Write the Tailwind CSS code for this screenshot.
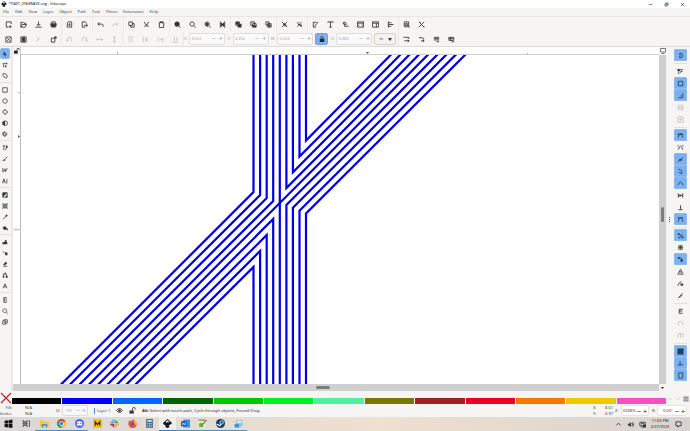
<!DOCTYPE html>
<html lang="en">
<head>
<meta charset="utf-8">
<title>*FAST_ENGRAVE.svg - Inkscape</title>
<script src="https://cdn.jsdelivr.net/npm/@tailwindcss/browser@4"></script>
</head>
<body class="h-screen overflow-hidden flex flex-col bg-[#f6f5f4] text-[#2b2f31] font-['Open_Sans','Noto_Sans',sans-serif] text-[4px] leading-[6px]">

<header class="h-[8px] shrink-0 bg-white flex items-center text-black">
  <svg class="size-[6px] ml-px mr-[2px]" viewBox="0 0 16 16"><path d="M8 0 15 7Q16 9 12 10L10 12 12 14 8 16 4 14 5 12 2 10Q0 9 1 7Z" fill="#16191c"/><path d="M8 2 11 5 9 6 8 5 6 7 5 5Z" fill="#fff"/></svg>
  <h1 class="flex-1">*FAST_ENGRAVE.svg - Inkscape</h1>
  <div class="flex" data-icons="min restore close" data-kind="window"></div>
</header>

<nav class="h-[9px] shrink-0 flex items-center gap-[6px] pl-[3px] border-b border-[#e9e7e5]">
  <button>File</button><button>Edit</button><button>View</button><button>Layer</button><button>Object</button><button>Path</button><button>Text</button><button>Filters</button><button>Extensions</button><button>Help</button>
</nav>

<div class="h-[15px] shrink-0 flex items-center pl-px" data-kind="top" data-icons="new open save print | import export | undo -redo | copy cut paste | zoomsel zoomdraw zoompage zoomwidth | dup clone unlink | group ungroup | fillstroke text layers xml docprops align | prefs tools"></div>

<div class="h-[15px] shrink-0 flex items-center pl-px border-b border-[#dddbd9]">
  <div class="flex items-center" data-kind="top" data-icons="selall sellayer -desel touch | -rotl -rotr -fliph -flipv | -raisetop -raise -lower -lowbot |"></div>
  <div class="flex items-center gap-[2px] text-[#a2a2a0]">
    <div class="flex items-center gap-[2px]"><label for="x">X:</label>
      <div class="w-[36px] h-[12px] border border-[#e0dedc] rounded-[2px] bg-[#fbfafa] flex items-center"><input id="x" value="8.522" class="w-full min-w-0 pl-px outline-none"><button class="w-[7px] shrink-0 text-[7px]" aria-label="Decrease X">−</button><button class="w-[7px] shrink-0 text-[7px]" aria-label="Increase X">+</button></div></div>
    <div class="flex items-center gap-[2px]"><label for="y">Y:</label>
      <div class="w-[36px] h-[12px] border border-[#e0dedc] rounded-[2px] bg-[#fbfafa] flex items-center"><input id="y" value="4.254" class="w-full min-w-0 pl-px outline-none"><button class="w-[7px] shrink-0 text-[7px]" aria-label="Decrease Y">−</button><button class="w-[7px] shrink-0 text-[7px]" aria-label="Increase Y">+</button></div></div>
    <div class="flex items-center gap-[2px]"><label for="w">W:</label>
      <div class="w-[36px] h-[12px] border border-[#e0dedc] rounded-[2px] bg-[#fbfafa] flex items-center"><input id="w" value="0.024" class="w-full min-w-0 pl-px outline-none"><button class="w-[7px] shrink-0 text-[7px]" aria-label="Decrease width">−</button><button class="w-[7px] shrink-0 text-[7px]" aria-label="Increase width">+</button></div></div>
    <button class="w-[13px] h-[12px] rounded-[2px] border border-[#6fa3e0] bg-[#7db1ee] grid place-items-center text-[#1d2b3a]" aria-label="Lock ratio"><svg class="size-[6px]" viewBox="0 0 16 16"><path d="M2 7h12v9H2z" fill="currentColor"/><path d="M5 7V4q0-3 3-3t3 3v3" fill="none" stroke="currentColor" stroke-width="2"/></svg></button>
    <div class="flex items-center gap-[2px]"><label for="h">H:</label>
      <div class="w-[36px] h-[12px] border border-[#e0dedc] rounded-[2px] bg-[#fbfafa] flex items-center"><input id="h" value="0.000" class="w-full min-w-0 pl-px outline-none"><button class="w-[7px] shrink-0 text-[7px]" aria-label="Decrease height">−</button><button class="w-[7px] shrink-0 text-[7px]" aria-label="Increase height">+</button></div></div>
    <div class="grid w-[22px] h-[12px] border border-[#d3d0cd] rounded-[2px] bg-[#f3f2f1] items-center text-[#2e3436]">
      <select aria-label="Units" class="col-start-1 row-start-1 appearance-none pl-[4px] w-full outline-none"><option>in</option><option>mm</option></select>
      <svg class="col-start-1 row-start-1 justify-self-end mr-[3px] w-[4px] h-[3px] pointer-events-none" viewBox="0 0 8 6"><path d="M0 0h8L4 6z" fill="currentColor"/></svg>
    </div>
  </div>
  <div class="flex items-center pl-[2px]" data-kind="top" data-icons="| scstroke sccorner scgrad scpat"></div>
</div>

<main class="flex-1 min-h-0 flex">
  <div class="w-[13px] shrink-0 flex flex-col pt-px border-r-2 border-[#ebe9e7]" data-kind="left" data-icons="*select node shape | rect circle star box spiral | pencil pen calli textA | grad mesh dropper bucket | tweak spray eraser connector lpe | measure zoom pages"></div>

  <div class="flex-1 min-w-0 grid grid-cols-[7px_1fr_7px] grid-rows-[8px_1fr_7px]">
    <button class="grid place-items-center text-[#222]" aria-label="Lock guides"><svg class="size-[6px]" viewBox="0 0 16 16"><path d="M0 7h10v8H0z" fill="currentColor"/><path d="M8 7V4q0-3 3-3t3 3v2" fill="none" stroke="currentColor" stroke-width="2"/></svg></button>
    <svg class="w-full h-[8px] bg-white border-l border-b border-[#cfcfcf]" aria-label="Horizontal ruler"><path d="M96.500 5v3M506.500 6v2" stroke="#aaa"/><path d="M345 5h3l-1.500 2z" fill="#555"/></svg>
    <button class="grid place-items-center text-[#555]" aria-label="Display mode"><svg class="size-[6px]" viewBox="0 0 12 12"><path d="M1 1h10v7H1zM3 11h6" fill="#fff" stroke="currentColor" stroke-width="1.600"/></svg></button>

    <svg class="w-[7px] h-full bg-white" aria-label="Vertical ruler"><path d="M5 37.500h2M5 174.500h2" stroke="#bbb"/><path d="M1 174.500h4" stroke="#ccc" stroke-width="2"/><path d="M5 80v3l2-1.500z" fill="#555"/></svg>
    <svg class="w-full h-full bg-white border-l border-[#bdbdbd] overflow-hidden" aria-label="Drawing">
      <g transform="translate(-21 -55)" fill="none" stroke="#0000ee" stroke-width="2.200">
        <path d="M253.500 50V192L56.500 389"/><path d="M260.100 50V195L65.500 389"/><path d="M266.700 50V198L75 389"/><path d="M273.200 50V201L84.500 389"/>
        <path d="M279.800 50V390"/><path d="M432.700 50 93.700 389"/>
        <path d="M286.400 50V188L423.500 50"/><path d="M292.900 50V172.300L414 50"/><path d="M299.500 50V156.500L405 50"/><path d="M306 50V140.500L395.500 50"/>
        <path d="M286.400 390V205L442 50"/><path d="M292.900 390V207.800L451 50"/><path d="M299.500 390V210.600L460.500 50"/><path d="M306 390V213.400L470 50"/>
        <path d="M273.200 390V219L103 389"/><path d="M266.700 390V235L112.500 389"/><path d="M260.100 390V251L121.800 389"/><path d="M253.500 390V267L131 389"/>
      </g>
    </svg>
    <div class="bg-[#cfcfcf] flex justify-center pt-[152px]"><div class="w-[3px] h-[15px] rounded-full bg-[#7d7d7d]"></div></div>

    <div class="col-span-2 bg-[#cfcfcf] flex items-center justify-center pr-[27px]"><div class="w-[14px] h-[3px] rounded-full bg-[#7d7d7d]"></div></div>
    <div class="grid place-items-center"><svg class="w-[3px] h-[2px]" viewBox="0 0 6 4"><path d="M0 0h6L3 4z" fill="#222"/></svg></div>
  </div>

  <div class="w-[24px] shrink-0 flex">
    <div class="w-[7px] self-center flex flex-col items-center gap-px"><i class="size-px bg-[#444]"></i><i class="size-px bg-[#444]"></i><i class="size-px bg-[#444]"></i></div>
    <div class="flex flex-col pt-[2px] pl-px" data-kind="snap" data-icons="*magnet | bbox *bbedge *bbcorner -bbmid -bbctr | *snode smid *spath *sint *scusp scen sperp *stan | *sother ctr *rot base mask clip | pgm -guide -grid2 | *gridf *guidex *page"></div>
  </div>
</main>

<div class="h-[13px] shrink-0 flex items-end">
  <button class="w-[12px] h-[12px]" aria-label="No colour"><svg class="size-full" viewBox="0 0 12 12"><path d="M1 1 11 11M11 1 1 11" stroke="#c8252d" stroke-width="1.300"/></svg></button>
  <div class="flex-1 flex gap-px h-[6px]">
    <button class="flex-1 bg-black" aria-label="Black"></button><button class="flex-1 bg-[#0000f5]" aria-label="Blue"></button><button class="flex-1 bg-[#0066ff]" aria-label="Azure"></button><button class="flex-1 bg-[#006400]" aria-label="Dark green"></button><button class="flex-1 bg-[#00c800]" aria-label="Green"></button><button class="flex-1 bg-[#00f020]" aria-label="Lime"></button><button class="flex-1 bg-[#50f0a0]" aria-label="Mint"></button><button class="flex-1 bg-[#787800]" aria-label="Olive"></button><button class="flex-1 bg-[#a02024]" aria-label="Brown"></button><button class="flex-1 bg-[#f00020]" aria-label="Red"></button><button class="flex-1 bg-[#f57800]" aria-label="Orange"></button><button class="flex-1 bg-[#f0c800]" aria-label="Yellow"></button><button class="flex-1 bg-[#f550c0]" aria-label="Pink"></button>
  </div>
  <div class="w-[24px] h-[10px] flex" data-kind="pal" data-icons="-up -down menu"></div>
</div>

<footer class="h-[13px] shrink-0 flex items-center">
  <dl class="w-[54px] grid grid-cols-[12px_1fr] gap-x-[13px] leading-[6px]"><dt class="justify-self-end">Fill:</dt><dd>N/A</dd><dt class="justify-self-end">Stroke:</dt><dd>N/A</dd></dl>
  <label for="op" class="w-[8px] pl-[2px]">O:</label>
  <div class="w-[26px] h-[11px] border border-[#dddbd8] rounded-[2px] bg-[#fbfafa] flex items-center text-[#a2a2a0]"><input id="op" value="100" class="w-full min-w-0 pl-[2px] outline-none"><button class="w-[6px] shrink-0 text-[7px]" aria-label="Decrease opacity">−</button><button class="w-[6px] shrink-0 text-[7px]" aria-label="Increase opacity">+</button></div>
  <button class="ml-[6px] pl-[2px] border-l border-[#3d8ad8] w-[19px] text-left whitespace-nowrap">Layer 1</button>
  <div class="flex" data-kind="status" data-icons="eye unlock"></div>
  <p class="flex-1 pl-[3px] whitespace-nowrap font-['Noto_Sans',sans-serif]"><b>Alt:</b> Select with touch-path, Cycle through objects, Forced Drag</p>
  <dl class="grid grid-cols-[8px_12px] leading-[6px] mr-[2px]"><dt>X:</dt><dd class="justify-self-end">8.61</dd><dt>Y:</dt><dd class="justify-self-end">4.97</dd></dl>
  <label for="z" class="w-[6px]">Z:</label>
  <div class="w-[28px] h-[11px] rounded-[2px] border border-[#e6e4e2] bg-white flex items-center"><input id="z" value="6338%" class="w-full min-w-0 pl-px outline-none"><button class="w-[6px] shrink-0 text-[8px]" aria-label="Zoom out">−</button><button class="w-[6px] shrink-0 text-[8px]" aria-label="Zoom in">+</button></div>
  <label for="r" class="w-[8px] pl-[3px]">R:</label>
  <div class="w-[30px] h-[11px] mr-[3px] rounded-[2px] border border-[#e6e4e2] bg-white flex items-center"><input id="r" value="0.00°" class="w-full min-w-0 pl-[5px] outline-none"><button class="w-[6px] shrink-0 text-[8px]" aria-label="Rotate left">−</button><button class="w-[6px] shrink-0 text-[8px]" aria-label="Rotate right">+</button></div>
</footer>

<div class="h-[14px] shrink-0 flex items-center bg-linear-to-r from-[#d9d7d9] via-[#efe0cf] via-55% to-[#d9d3cf] text-[#111]">
  <div class="w-[247px] h-full flex" id="apps"></div>
  <div class="ml-auto flex items-center" data-kind="tray" data-icons="up speaker net"></div>
  <time class="w-[24px] text-center leading-[6px]">11:03 PM<br>2/27/2025</time>
  <div class="flex mr-[6px]" data-kind="tray" data-icons="note"></div>
</div>

<script>
// Icons on a 16x16 grid: [stroked path, filled path]
const I = {
  min:['M3 8h10'], restore:['M3 6h7v7H3zM6 6V3h7v7h-3'], close:['M3 3l10 10M13 3 3 13'],
  new:['M14 7V2H3v12h5M12 10v6M9 13h6'], open:['M2 14V3h5l2 2h4v3M2 14l3-6h10l-3 6z'], save:['M8 1v9M4 7l4 4 4-4M1 14h14'],
  print:['M4 5V2h8v3','M1 5h14v7h-2v3H3v-3H1z'], import:['M5 2h8v12H3V5zM8 5v5M5 8l3 3 3-3'], export:['M10 14H3V2h7l3 4M7 10h8M12 7l3 3-3 3'],
  undo:['M5 3 2 7l4 3M2 7h9q3 0 3 4v2'], redo:['M11 3l3 4-4 3M14 7H5q-3 0-3 4v2'],
  copy:['M2 2h8v8H2zM6 10v4h8V6h-4'], cut:['M3 2l4 7 4 3M13 2 9 9l-4 3M3 12h3M10 12h3'], paste:['M3 3h10v12H3z','M5 1h6v4H5z'],
  zoomsel:['M11 11l4 4','M7 1a6 6 0 1 0 .1 0z'], zoomdraw:['M7 2a5 5 0 1 0 .1 0zM11 11l4 4'], zoompage:['M11 11l4 4M7 2a5 5 0 1 0 .1 0z','M4 4h6v7H4z'], zoomwidth:['M3 1v14M13 1v14','M4 2l4 4 4-4v12l-4-4-4 4z'],
  dup:['M2 2h8v8H2z','M6 6h9v9H6zM2 2h7v6H2z'], clone:['M2 2h8v8H2zM6 6h8v8H6z','M6 10h8v4H6z'], unlink:['M2 2h7v7H2zM6 6h8v8H6z','M7 8h6v5H7z'],
  group:['M2 2l4 4M14 2l-4 4M2 14l4-4M14 14l-4-4','M5 5h5v5H5zM8 8h4v4H8z'], ungroup:['M2 4l3 2M13 3l-3 3M3 13l3-3M13 13l-3-3M7 2v2','M5 6h4v4H5zM9 8h4v4H9z'],
  fillstroke:['M2 3h8M3 3v11h6M14 2 6 12'], text:['M2 4V2h12v2M8 2v12M5 14h6'], layers:['M3 3h6M5 7h7M8 12h7M3 3v4h3v5h3'], xml:['M1 2h14v12H1zM1 5h14M5 8l-2 2 2 2M11 8l2 2-2 2'], docprops:['M1 2h14v12H1zM1 5h14M10 5v9'], align:['M3 1v14M3 4h7M3 8h12M3 12h7'],
  prefs:['M3 2h10v11H3zM6 6h4v4H6zM11 10l4 5'], tools:['M2 14 14 2M3 3l11 11M2 3h4M11 13h4'],
  selall:['M2 2h12v12H2zM5 5l6 6M11 5l-6 6'], sellayer:['M2 2h12v12H2z','M4 3h8v10H4z'], desel:['M3 12l9-8M4 4l3 3'], touch:['M3 5h8v9H3z','M10 1h5v5h-5z'],
  rotl:['M3 12V7q0-4 5-4t5 4v5M1 9l2 3 3-3'], rotr:['M3 12V7q0-4 5-4t5 4v5M10 9l3 3 2-3'], fliph:['M1 8h14M4 5 1 8l3 3M12 5l3 3-3 3'], flipv:['M8 1v14M5 4l3-3 3 3M5 12l3 3 3-3'],
  raisetop:['M2 2h12M5 5v9M11 5v9'], raise:['M3 2v12M6 5h6M9 7v7M12 5v6'], lower:['M3 3v9M7 8h6M13 3v11'], lowbot:['M2 14h12M5 2v9M11 2v9'],
  scstroke:['M1 3h12v4M3 11h10M10 9l4 2-3 3'], sccorner:['M2 4h8q3 0 3 4M7 11h7M11 9l3 2-3 3'], scgrad:['M2 3h12M2 6h12M2 9h12M8 13h6'], scpat:['M2 3h11v7H2zM2 6h11M6 3v7M8 13h6'],
  select:[,'M4 1v12l3-3 2 5 2-1-2-4h4z'], node:['M4 14V7q0-3 5-3M2 4h4','M8 8v7l5-4zM10 2h4v4h-4z'], shape:['M2 5a4 4 0 0 1 8-1q5 1 4 6t-6 3q-3-1-2-4-4-1-4-4z'],
  rect:['M2 2h12v12H2z'], circle:['M8 2a6 6 0 1 0 .1 0z'], star:['M6 2h4l1 3 3 1v4l-3 1-1 3H7l-1-3-4-2 1-4 3-1z'], box:['M2 5l6-3 6 3v7l-6 3-6-3z','M2 5l6-3v13l-6-3z'], spiral:['M8 8q2-1 2 1t-3 2-3-4 5-3 4 5-5 5-6-5 5-7'],
  pencil:['M2 2h6M5 2v12M9 13l4-8','M9 2h6v5h-4z'], pen:['M2 13q2-4 4-3M6 11l8-9','M6 9l3 3-5 2z'], calli:['M2 3v10l4-3V4M9 13l5-10M9 5v8'], textA:['M1 14 5 2l4 12M3 10h5M13 3v12'],
  grad:['M2 2h12v12H2z','M2 2h12L2 14zM10 9h4v5h-4z'], mesh:['M3 3h10v10H3zM8 3v10M3 8h10M1 1l3 3M15 1l-3 3M1 15l3-3M15 15l-3-3'], dropper:['M3 14l8-9','M9 3l4-2 2 3-3 4z'], bucket:['M5 3v8','M1 8l8-5 5 6-6 5zM13 10h3v4h-3z'],
  tweak:[,'M1 14V9l5-1 4-6 3 2-2 4h3v6z'], spray:['M2 3h2M3 7h2','M7 6h7l1 8H9z'], eraser:['M3 14h11','M3 9l7-7 4 4-7 6z'], connector:['M4 12V5h7M12 6v6','M2 10h4v5H2zM10 10h5v5h-5zM7 2h4v4H7z'], lpe:['M3 14 8 2l5 12M4 10h8'],
  measure:['M5 1h6v14H5zM5 5h3M5 9h3'], zoom:['M7 2a5 5 0 1 0 .1 0zM11 11l4 4'], pages:['M2 5h8v9H2zM5 5V2h9v9h-4M5 9h3'],
  magnet:['M5 3q8-2 8 5t-8 5M5 6q3-1 3 2t-3 2'], bbox:['M4 14V4h10','M1 2h5v5H1zM8 7h5l-5 5z'], bbedge:['M3 3h10v10H3z'], bbcorner:['M3 13h10V3M7 9h2'], bbmid:['M3 3h10v10H3zM1 8h14'], bbctr:['M2 2h12v12H2zM8 5v6M5 8h6'],
  snode:['M3 13q0-8 5-8t5 8M1 5h14','M6 3h4v4H6z'], smid:['M3 13q2-8 5-8t5 8M1 4h3M12 4h3'], spath:['M2 13 14 3','M5 7h6v4H5z'], sint:['M3 3q10 0 8 10M4 10l7 3'], scusp:['M2 12q6-15 12 0'], scen:['M3 3v10M13 3v10M3 8h10M7 5v6'], sperp:['M8 3v9M3 13h10'], stan:['M2 4h12M3 13q0-9 5-9t5 9'],
  sother:['M4 4l8 8','M2 3h4v4H2zM9 5h3v3H9zM4 11h4v3H4zM11 10h4v4h-4z'], ctr:['M4 4h8v8H4zM4 8h8M8 4v8'], rot:['M3 4q5-2 8 2','M8 7h5v6H8zM2 3h4v4H2z'], base:['M3 12 8 3l5 9M5 9h6M1 14h14'], mask:['M2 13q2-8 8-9','M8 8h6v5H8z'], clip:['M3 13 13 3M6 13l6-6'],
  pgm:['M13 3H5v9h8M5 7h7'], guide:['M3 13V8q0-5 5-5t5 5v5'], grid2:['M2 13V4h6v9M8 4h6v9'], gridf:[,'M1 1h14v14H1z'], guidex:['M7 2v10M2 11h12'], page:['M4 2h9v12H4z'],
  up:['M3 10l5-5 5 5'], down:['M3 5l5 5 5-5'], menu:['M1 3h14M1 8h14M1 13h14'],
  eye:['M1 8q7-9 14 0-7 9-14 0z','M8 5a3 3 0 1 0 .1 0z'], unlock:['M8 8V4q0-3 3-3t3 3v2','M1 8h10v7H1z'],
  speaker:['M11 5q3 3 0 6M13 3q4 5 0 10','M2 6h3l4-4v12l-4-4H2z'], net:['M2 3h12v8H2zM5 14h5M5 6h6','M9 8h7v7H9z'], note:['M2 2h12v9H9l-2 3v-3H2z']
};
const box = {
  window:'w-[16px] h-[8px] grid place-items-center', top:'w-[15px] h-[12px] grid place-items-center', left:'w-[10px] h-[11px] grid place-items-center rounded-[2px]',
  snap:'w-[13px] h-[12px] grid place-items-center rounded-[1px]', pal:'w-[8px] h-[10px] grid place-items-center', status:'w-[13px] grid place-items-center', tray:'w-[12px] grid place-items-center'
};
const size = { window:'size-[5px]', top:'size-[7px]', left:'size-[6px]', snap:'size-[7px]', pal:'size-[6px]', status:'size-[7px]', tray:'size-[7px]' };
for (const bar of document.querySelectorAll('[data-icons]')) {
  const k = bar.dataset.kind;
  bar.innerHTML = bar.dataset.icons.trim().split(/\s+/).map(t => {
    if (t === '|') return k === 'top' ? '<i class="w-px h-[15px] bg-[#ebe9e7]"></i>' : k === 'left' ? '<i class="h-px my-px bg-[#e4e2e0]"></i>' : '<i class="h-px mt-[2px] mb-px bg-[#e3e1df]"></i>';
    const n = t.replace(/^[*-]/, ''), [s, f] = I[n];
    const tone = t[0] === '-' ? 'text-[#c4c3c1]' : t[0] === '*' ? 'text-[#23405f] bg-[#7db1ee] border border-[#8ab8f0]' : 'text-[#34383a]';
    return `<button aria-label="${n}" class="${box[k]} ${tone}"><svg class="${size[k]}" viewBox="0 0 16 16">${f ? `<path d="${f}" fill="currentColor"/>` : ''}${s ? `<path d="${s}" fill="none" stroke="currentColor" stroke-width="2"/>` : ''}</svg></button>`;
  }).join('');
}
const apps = [
  ['Start',0,'<path d="M1 3l6-1v6H1zM8 2l7-1v7H8zM1 9h6v6l-6-1zM8 9h7v7l-7-1z" fill="#111"/>'],
  ['Task view',0,'<path d="M2 2v3h7V2M2 14v-3h7v3M2 7h7v2H2zM13 2v12" fill="none" stroke="#333" stroke-width="1.500"/>'],
  ['Explorer',1,'<path d="M0 2h6l2 2h8v10H0z" fill="#f7c744"/><path d="M3 9h10v6H3z" fill="#3f97dc"/><path d="M6 12h4v3H6z" fill="#f7e3a0"/>'],
  ['Chrome',1,'<circle cx="8" cy="8" r="8" fill="#f2c12e"/><path d="M8 8 1 4a8 8 0 0 1 14 0z" fill="#dc4437"/><path d="M8 8v8A8 8 0 0 1 1 4z" fill="#2d9a50"/><circle cx="8" cy="8" r="4" fill="#fff"/><circle cx="8" cy="8" r="3" fill="#3b7de8"/>'],
  ['Discord',1,'<circle cx="8" cy="8" r="8" fill="#5865f2"/><path d="M4 5q4-2 8 0l1 6-3 1-1-1H7l-1 1-3-1z" fill="#fff"/><path d="M6 7v2M10 7v2" stroke="#5865f2" stroke-width="2"/>'],
  ['Mail',0,'<path d="M0 0h16v16H0z" fill="#f8c300"/><path d="M4 12V5l4 5 4-5v7" fill="none" stroke="#222" stroke-width="2"/>'],
  ['Slack',0,'<g stroke-width="3" stroke-linecap="round"><path d="M6 2v4M2 6h2" stroke="#38bfe8"/><path d="M10 3v3M13 6h-2" stroke="#2eb67d"/><path d="M10 14v-4h4" stroke="#e8b02e" fill="none"/><path d="M2 10h4v3" stroke="#e01e5a" fill="none"/></g>'],
  ['Firefox',0,'<path d="M2 2l3 2q3-4 6-3l4 5q2 8-5 10-7 1-9-5Q0 6 2 2z" fill="#f0582c"/><path d="M11 1q6 5 3 10l-4-6z" fill="#fbc03a"/><circle cx="8" cy="9" r="3.500" fill="#7a4ad8"/>'],
  ['Calculator',0,'<path d="M2 0h12v16H2z" fill="#4c6b86"/><path d="M4 2h8v3H4z" fill="#d3e8f5"/><path d="M4 8h8M4 11h8M4 14h8" stroke="#c4dcee" stroke-width="1.500" stroke-dasharray="2 1"/>'],
  ['Inkscape',2,'<path d="M8 0 16 7q0 2-4 3l-2 2 2 2-4 2-4-2 1-2-3-2Q0 9 0 7z" fill="#17191c"/><path d="M8 2l3 3-2 1-1-1-2 2-1-2z" fill="#fff"/>'],
  ['Word',1,'<path d="M4 1h12v14H4z" fill="#3c8fdc"/><path d="M0 4h10v9H0z" fill="#174ea6"/><path d="M2 6l1 5 2-4 2 4 1-5" fill="none" stroke="#fff"/>'],
  ['Notepad++',1,'<path d="M1 2h12v13H1z" fill="#e8f0c8"/><path d="M2 8l5-2 3 8H2z" fill="#66b33a"/><path d="M7 11 15 2" stroke="#8a6a2a" stroke-width="2"/><path d="M1 2h12" stroke="#777" stroke-width="2"/>'],
  ['Steam',1,'<circle cx="8" cy="8" r="8" fill="#123a66"/><circle cx="10" cy="6" r="3" fill="none" stroke="#fff" stroke-width="1.500"/><path d="M1 9l6 3 2-3" fill="none" stroke="#fff" stroke-width="2"/>'],
  ['Files',1,'<path d="M4 3l10-2 2 9-5 5H2z" fill="#8ec4e4"/><path d="M1 9h8v6H1z" fill="#4a90bd"/><path d="M6 4l7-1v4H6z" fill="#e9f5fb"/>']
];
document.getElementById('apps').innerHTML = apps.map(([n, s, g]) =>
  `<button aria-label="${n}" class="flex-1 grid place-items-center border-b ${s === 2 ? 'bg-white/50 border-[#2f7fc4]' : s ? 'border-[#4b8fc6]' : 'border-transparent'}"><svg class="size-[9px]" viewBox="0 0 16 16">${g}</svg></button>`).join('');
</script>
</body>
</html>
